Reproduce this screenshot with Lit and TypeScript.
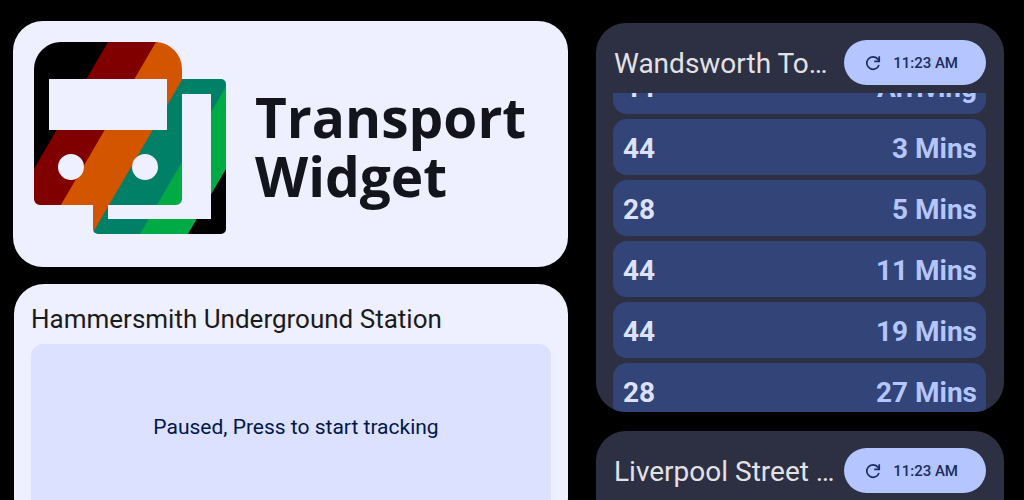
import { LitElement, html, css, svg } from "lit";
import { customElement, property } from "lit/decorators.js";

interface Arrival {
  route: string;
  due: string;
}

@customElement("brand-logo")
export class BrandLogo extends LitElement {
  static styles = css`
    :host {
      display: block;
      flex: none;
    }
    .mark {
      display: block;
      width: 192px;
      height: 192px;
    }
  `;

  render() {
    // Diagonal bands, each given by its left edge on the top line.
    const bands: [number, string][] = [
      [74, "#800000"],
      [122, "#d45500"],
      [170, "#008066"],
      [218, "#00aa44"],
      [266, "#000000"],
    ];
    return html`
      <svg class="mark" viewBox="0 0 192 192" role="img" aria-label="Transport Widget logo">
        <defs>
          <clipPath id="vehicles">
            <path
              clip-rule="evenodd"
              d="M27 0H121A27 27 0 0 1 148 27V157A6 6 0 0 1 142 163H6A6 6 0 0 1 0 157V27A27 27 0 0 1 27 0ZM15 37V88H133V37ZM24 125a13 13 0 1 0 26 0a13 13 0 1 0 -26 0ZM98 125a13 13 0 1 0 26 0a13 13 0 1 0 -26 0Z"
            />
            <path d="M148 37H187A5 5 0 0 1 192 42V187A5 5 0 0 1 187 192H64A5 5 0 0 1 59 187V163H74V177H177V52H148Z" />
          </clipPath>
        </defs>
        <g clip-path="url(#vehicles)">
          <path d="M0 0H76L0 130Z" fill="#000" />
          ${bands.map(
            ([x, color]) => svg`<path d="M${x} 0H${x + 50}L${x - 62} 192H${x - 112}Z" fill=${color} />`
          )}
        </g>
      </svg>
    `;
  }
}

@customElement("departure-board")
export class DepartureBoard extends LitElement {
  @property() station = "";
  @property() time = "";
  @property({ attribute: false }) arrivals: Arrival[] = [];
  @property({ type: Number }) scrolled = 0;

  static styles = css`
    :host {
      display: block;
      border-radius: 30px;
      overflow: hidden;
      background: #2c3042;
      font-family: Roboto, sans-serif;
    }
    .header {
      display: flex;
      align-items: center;
      gap: 8px;
      padding: 17px 18px 8px;
    }
    .station {
      flex: 1;
      min-width: 0;
      margin: 0;
      padding-top: 3px;
      overflow: hidden;
      text-overflow: ellipsis;
      white-space: nowrap;
      font-size: 28px;
      line-height: 42px;
      font-weight: 400;
      color: #e4e1e6;
    }
    .refresh {
      display: flex;
      align-items: center;
      flex: none;
      gap: 10px;
      height: 45px;
      padding: 0 28px 0 19px;
      border: 0;
      border-radius: 23px;
      background: #b4c5ff;
      color: #1b2d60;
      font: 500 15px/20px Roboto, sans-serif;
    }
    .icon {
      width: 20px;
      height: 20px;
      fill: none;
      stroke: currentColor;
      stroke-width: 2;
    }
    .list {
      display: grid;
      align-content: start;
      gap: 5px;
      height: 319px;
      margin: 0;
      padding: 0 18px 0 17px;
      overflow-y: auto;
      scrollbar-width: none;
      list-style: none;
    }
    .row {
      display: flex;
      align-items: center;
      justify-content: space-between;
      padding: 4px 9px 0 10px;
      border-radius: 14px;
      background: #334478;
      color: #dbe1ff;
      font-size: 28px;
      line-height: 52px;
      font-weight: 700;
    }
    .due {
      color: #b4c5ff;
    }
  `;

  firstUpdated() {
    this.renderRoot.querySelector(".list")!.scrollTop = this.scrolled;
  }

  render() {
    return html`
      <header class="header">
        <h2 class="station">${this.station}</h2>
        <button class="refresh" type="button">
          <svg class="icon" viewBox="0 0 24 24" aria-hidden="true">
            <path d="M19.2 14.4A7.5 7.5 0 1 1 17.6 7L19.4 9.2M19.5 4V10H13.5" />
          </svg>
          ${this.time}
        </button>
      </header>
      <ul class="list">
        ${this.arrivals.map(
          (a) => html`<li class="row"><span>${a.route}</span><span class="due">${a.due}</span></li>`
        )}
      </ul>
    `;
  }
}

@customElement("app-root")
export class AppRoot extends LitElement {
  static styles = css`
    :host {
      display: block;
      height: 100vh;
      overflow: hidden;
      background: #000;
    }
    .page {
      display: grid;
      grid-template-columns: 555fr 408fr;
      align-items: start;
      gap: 28px;
      padding: 21px 20px 0 13px;
    }
    .column {
      display: grid;
      grid-template-columns: minmax(0, 1fr);
      gap: 17px;
    }
    .boards {
      gap: 19px;
      padding-top: 2px;
    }
    .card {
      border-radius: 30px;
      background: #eeefff;
    }
    .brand {
      display: flex;
      align-items: center;
      gap: 29px;
      padding: 21px 21px 33px;
    }
    .title {
      margin: 0;
      padding-top: 16px;
      color: #14141c;
      font: 700 55px/59px "Open Sans", sans-serif;
    }
    .tracker {
      margin-left: 1px;
      padding: 17px;
      font-family: Roboto, sans-serif;
    }
    .stop {
      margin: 0 0 7px;
      color: #1b1b1f;
      font-size: 26px;
      line-height: 36px;
      font-weight: 400;
    }
    .start {
      display: block;
      width: 100%;
      padding: 70px 16px 70px 26px;
      border: 0;
      border-radius: 12px;
      background: #dbe1ff;
      color: #00174b;
      font: 400 21px/26px Roboto, sans-serif;
    }
  `;

  private wandsworth: Arrival[] = [
    { route: "44", due: "Arriving" },
    { route: "44", due: "3 Mins" },
    { route: "28", due: "5 Mins" },
    { route: "44", due: "11 Mins" },
    { route: "44", due: "19 Mins" },
    { route: "28", due: "27 Mins" },
  ];

  render() {
    return html`
      <main class="page">
        <div class="column">
          <section class="card brand">
            <brand-logo></brand-logo>
            <h1 class="title">Transport<br />Widget</h1>
          </section>
          <section class="card tracker">
            <h2 class="stop">Hammersmith Underground Station</h2>
            <button class="start" type="button">Paused, Press to start tracking</button>
          </section>
        </div>
        <div class="column boards">
          <departure-board
            station="Wandsworth Town Station"
            time="11:23 AM"
            scrolled="35"
            .arrivals=${this.wandsworth}
          ></departure-board>
          <departure-board station="Liverpool Street Station" time="11:23 AM"></departure-board>
        </div>
      </main>
    `;
  }
}
